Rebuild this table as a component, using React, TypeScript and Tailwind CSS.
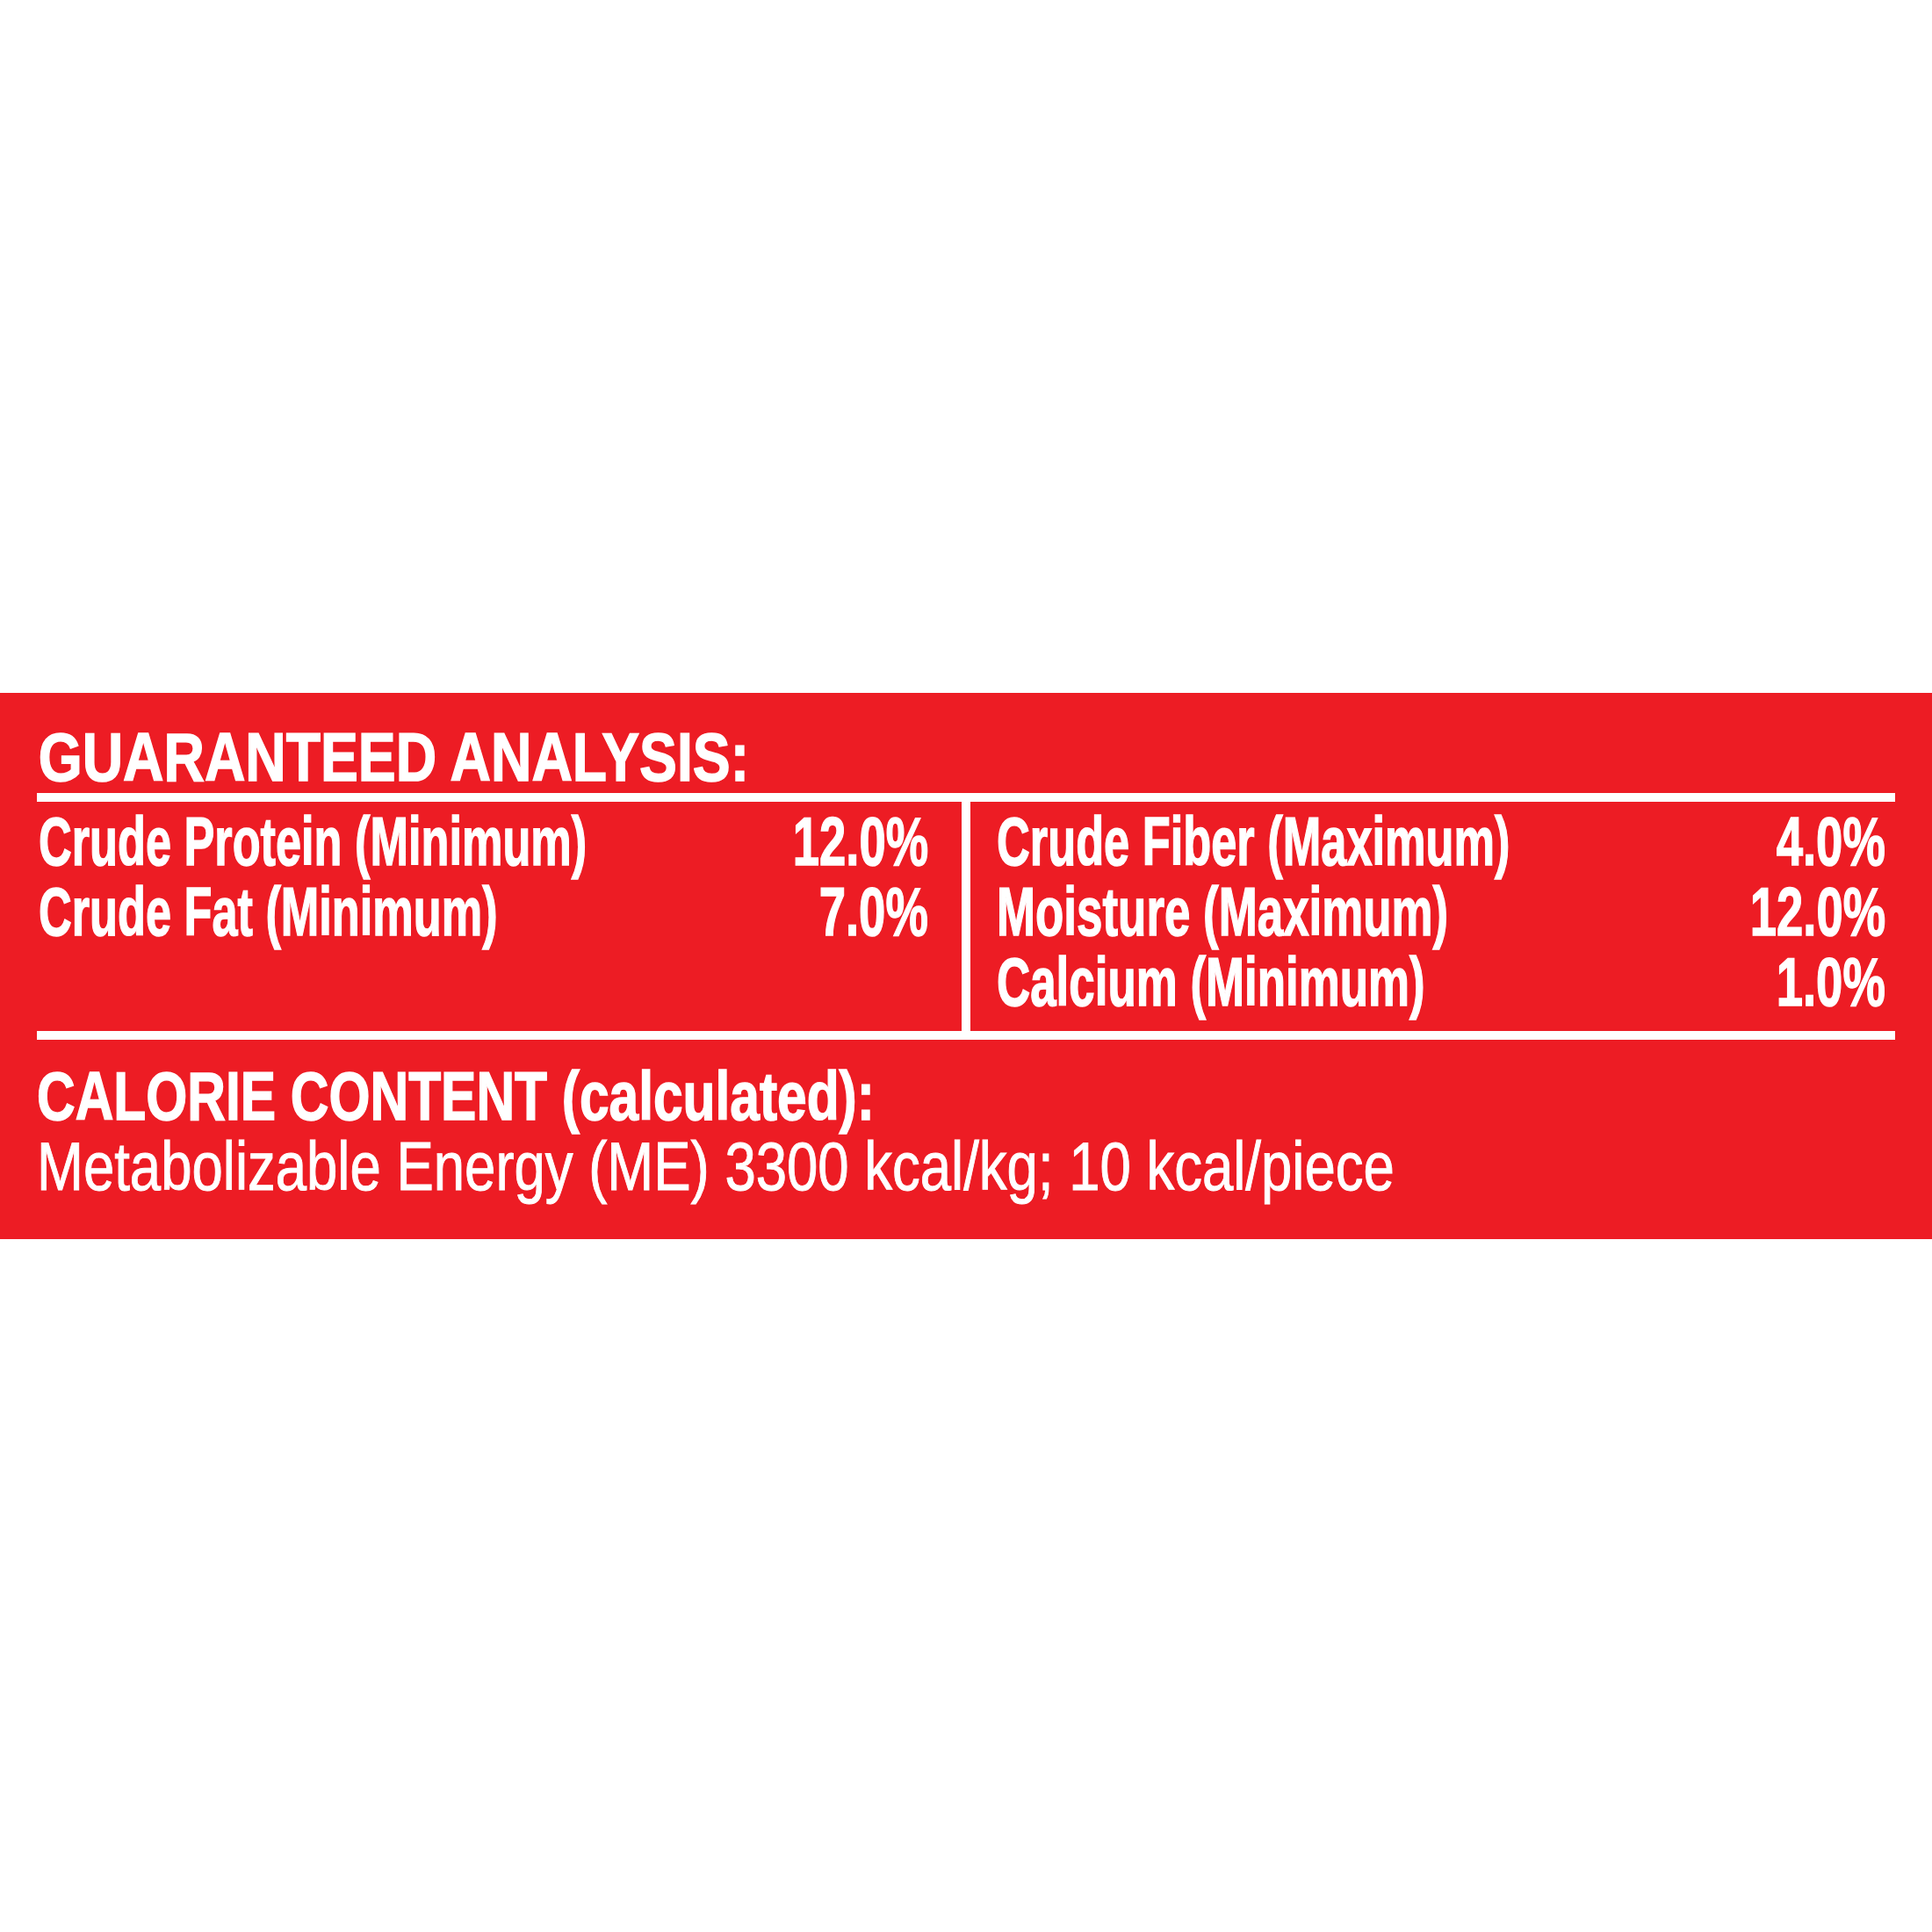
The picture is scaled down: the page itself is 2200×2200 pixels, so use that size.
import React from "react";

type R = { label: string; value: string; ls: string };

const left: R[] = [
  { label: "Crude Protein (Minimum)", value: "12.0%", ls: "scale-x-[0.67]" },
  { label: "Crude Fat (Minimum)", value: "7.0%", ls: "scale-x-[0.67]" },
];
const right: R[] = [
  { label: "Crude Fiber (Maximum)", value: "4.0%", ls: "scale-x-[0.671]" },
  { label: "Moisture (Maximum)", value: "12.0%", ls: "scale-x-[0.678]" },
  { label: "Calcium (Minimum)", value: "1.0%", ls: "scale-x-[0.678]" },
];

const heavy = "font-bold [-webkit-text-stroke:1.5px_white]";

function Row({ label, value, ls }: R) {
  return (
    <div className={`flex text-[78px] leading-[80px] ${heavy}`}>
      <span className={`block flex-1 min-w-0 whitespace-nowrap origin-left ${ls}`}>{label}</span>
      <span className="block shrink-0 whitespace-nowrap origin-right scale-x-[0.698]">{value}</span>
    </div>
  );
}

export default function App() {
  return (
    <div className="w-[2200px] h-[2200px] bg-white flex items-center font-['Liberation_Sans',Arial,sans-serif] text-white">
      <div className="w-full h-[622px] bg-[#ED1C24] px-[42px] pt-[33px] flex flex-col">
        <div className={`text-[78px] leading-[80px] pl-[2px] whitespace-nowrap origin-left scale-x-[0.824] ${heavy}`}>
          GUARANTEED ANALYSIS:
        </div>
        <div className="mt-[1px] h-[10px] bg-white" />
        <div className="flex">
          <div className="w-[1053px] shrink-0 pt-[5px] pb-[16px] pr-[38px] pl-[2px]">
            {left.map((r) => (
              <Row key={r.label} {...r} />
            ))}
          </div>
          <div className="w-[10px] shrink-0 bg-white" />
          <div className="flex-1 min-w-0 pt-[5px] pb-[16px] pl-[30px] pr-[11px]">
            {right.map((r) => (
              <Row key={r.label} {...r} />
            ))}
          </div>
        </div>
        <div className="h-[10px] bg-white" />
        <div className={`mt-[24px] text-[78px] leading-[80px] whitespace-nowrap origin-left scale-x-[0.775] ${heavy}`}>
          CALORIE CONTENT (calculated):
        </div>
        <div className="text-[78px] leading-[80px] font-normal whitespace-nowrap origin-left scale-x-[0.814] [-webkit-text-stroke:1px_white]">
          Metabolizable Energy (ME) 3300 kcal/kg; 10 kcal/piece
        </div>
      </div>
    </div>
  );
}
